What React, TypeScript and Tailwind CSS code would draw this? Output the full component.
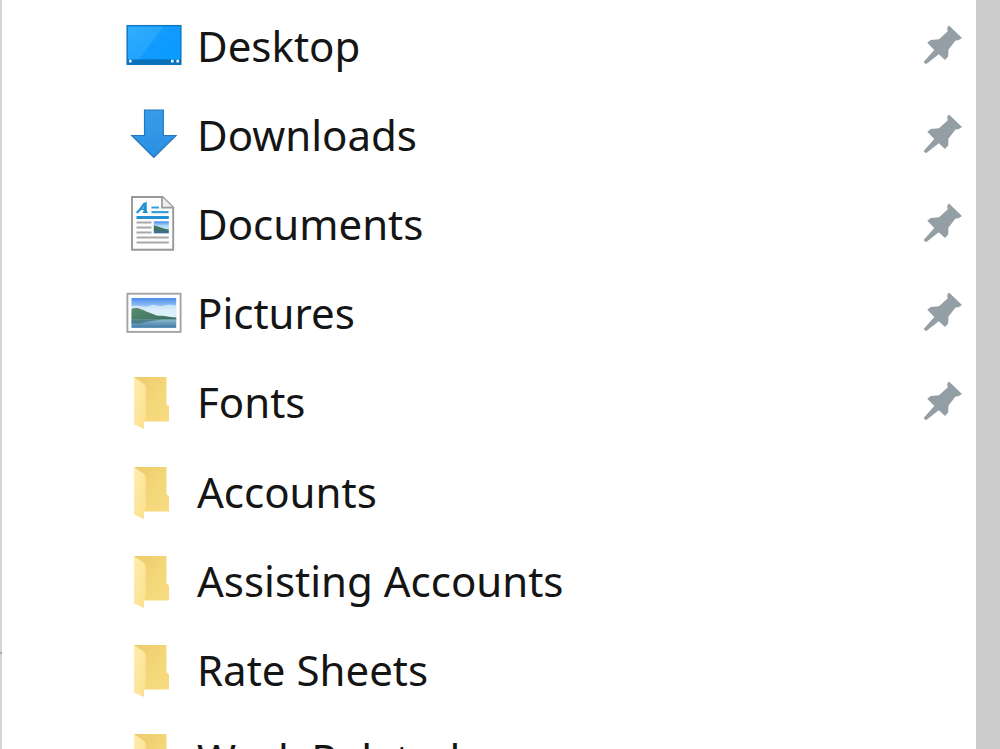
import type { ReactNode } from "react";

type IconName = "desktop" | "downloads" | "documents" | "pictures" | "folder";

const pinned: { name: string; icon: IconName }[] = [
  { name: "Desktop", icon: "desktop" },
  { name: "Downloads", icon: "downloads" },
  { name: "Documents", icon: "documents" },
  { name: "Pictures", icon: "pictures" },
  { name: "Fonts", icon: "folder" },
];

const recent: { name: string; icon: IconName }[] = [
  { name: "Accounts", icon: "folder" },
  { name: "Assisting Accounts", icon: "folder" },
  { name: "Rate Sheets", icon: "folder" },
  { name: "Work Related", icon: "folder" },
];

const art: Record<IconName, ReactNode> = {
  desktop: (
    <>
      <rect x="1.2" y="8.7" width="53.6" height="38.6" fill="url(#screen)" stroke="#0f78c2" strokeWidth="1.5" />
      <path d="M2 9.5H37L13 43H2Z" fill="#4dbcff" opacity=".3" />
      <rect x="1" y="42.4" width="54" height="4.8" fill="#0a70ba" />
      <path d="M3 42.8h2.6v2.6H3zM45 42.8h2.6v2.6H45zM50.4 42.8H53v2.6h-2.6z" fill="#e4f5ff" />
    </>
  ),
  downloads: (
    <path d="M18.5 4H37.3V29.5H50L27.8 51.5L5.8 29.5H18.5Z" fill="url(#arrow)" stroke="#2377bd" strokeWidth="1.2" />
  ),
  documents: (
    <>
      <path d="M6 2H36.5L47.2 12.5V54.7H6Z" fill="#fdfdfd" stroke="#989898" strokeWidth="1.9" />
      <path d="M36 2V12.7H47.2" fill="#eee" stroke="#989898" strokeWidth="1.7" />
      <path d="M10.5 17.5C13.5 17 15.5 11.5 18.5 8.5" fill="none" stroke="#2590d2" strokeWidth="2.2" />
      <path d="M17 8.5L20.6 6.5L20.9 16.3L22.3 18H16L17.6 16.3Z" fill="#2590d2" />
      <path d="M13.5 14.2H19" stroke="#2590d2" strokeWidth="1.6" />
      <path d="M25.5 12.5H33M25.5 17.2H42.5" stroke="#37a0dc" strokeWidth="2.2" />
      <path d="M10.5 22.4H42.8" stroke="#2590d2" strokeWidth="3" />
      <path d="M10.5 27.4H25.5M10.5 32.4H25.5M10.5 37.4H25.5M10.5 42.4H42.8M10.5 47.4H42.8" stroke="#a8a8a8" strokeWidth="2" />
      <rect x="27.8" y="26.3" width="15" height="12" fill="url(#sky)" />
      <path d="M27.8 30.5C32 31 37 34 42.8 34.5V36H27.8Z" fill="#3e7561" />
      <path d="M27.8 36H42.8V38.3H27.8Z" fill="#396f9a" />
    </>
  ),
  pictures: (
    <>
      <rect x="1.4" y="9.7" width="53.2" height="38.2" fill="#fff" stroke="#a4a4a4" strokeWidth="1.9" />
      <rect x="5.5" y="14" width="44.7" height="29.8" fill="url(#sky)" />
      <path d="M5.5 22C11 20 16 24 23 22C30 19 32 24 38 21.5C43 19.5 47 22 50.2 21V33H5.5Z" fill="#f2fafd" opacity=".6" />
      <path d="M5.5 25C8 23.4 12 23.6 15 25.2C18.5 26 19.5 27.6 23 28.4C27 29.4 29 31.8 34 31.8C40 31.6 45 33.6 50.2 33.6V36.5H5.5Z" fill="url(#hill)" />
      <rect x="5.5" y="35.4" width="44.7" height="8.4" fill="url(#water)" />
      <path d="M5.5 35.4H36L24 37.2L14 39.5H5.5Z" fill="#2f6064" opacity=".6" />
    </>
  ),
  folder: (
    <>
      <path d="M8 4H40.5V31L43 33.5V48.5H8Z" fill="url(#folderBack)" />
      <path d="M8 4L17.5 10.5Q19.7 12 19.7 14.5V45.5L18 48V56L8 51.5Z" fill="url(#folderFront)" />
    </>
  ),
};

function Gradients() {
  return (
    <svg width="0" height="0" className="absolute" aria-hidden="true">
      <defs>
        <linearGradient id="screen" x1="0" y1="0" x2="1" y2="1">
          <stop offset="0" stopColor="#27a8fb" />
          <stop offset=".5" stopColor="#109aff" />
          <stop offset="1" stopColor="#079cff" />
        </linearGradient>
        <linearGradient id="arrow" x1="0" y1="0" x2="0" y2="1">
          <stop offset="0" stopColor="#399ce9" />
          <stop offset="1" stopColor="#2b8fe2" />
        </linearGradient>
        <linearGradient id="sky" x1="0" y1="0" x2="0" y2="1">
          <stop offset="0" stopColor="#4a8bea" />
          <stop offset=".4" stopColor="#b6dcfa" />
          <stop offset="1" stopColor="#cfeaf5" />
        </linearGradient>
        <linearGradient id="hill" x1="0" y1="0" x2="1" y2="1">
          <stop offset="0" stopColor="#5b8d6c" />
          <stop offset="1" stopColor="#386e60" />
        </linearGradient>
        <linearGradient id="water" x1="0" y1="0" x2="0" y2="1">
          <stop offset="0" stopColor="#8fb9cd" />
          <stop offset="1" stopColor="#3f79a6" />
        </linearGradient>
        <linearGradient id="folderBack" x1="0" y1="0" x2="1" y2="1">
          <stop offset="0" stopColor="#eccb6c" />
          <stop offset=".55" stopColor="#f4d779" />
          <stop offset="1" stopColor="#f8dc80" />
        </linearGradient>
        <linearGradient id="folderFront" x1="0" y1="0" x2="1" y2="1">
          <stop offset="0" stopColor="#ffedaf" />
          <stop offset="1" stopColor="#fbdf8d" />
        </linearGradient>
      </defs>
    </svg>
  );
}

function Pin() {
  return (
    <svg viewBox="0 0 40 40" className="size-10" aria-hidden="true">
      <path
        d="M26 .5L39 13L35.5 15.2L32.5 15.5L25.5 24.5L25.2 31.5L22 35L15.8 29.3L3 39.3L.6 37L11.3 25L4.3 17.8L7.7 15L16 14.2L24.6 6.5L24.2 2.7Z"
        fill="#949fa5"
      />
    </svg>
  );
}

function Row({ name, icon, isPinned }: { name: string; icon: IconName; isPinned?: boolean }) {
  return (
    <li className="flex h-[89px] items-center pr-[13px] pl-[124px]">
      <a href={"#" + name.replace(" ", "-")} className="flex min-w-0 flex-1 items-center gap-[15px]">
        <svg viewBox="0 0 56 56" className="size-14 shrink-0" aria-hidden="true">
          {art[icon]}
        </svg>
        <span className="pt-0.5 text-[42px] leading-[56px] whitespace-nowrap">{name}</span>
      </a>
      {isPinned && (
        <button type="button" aria-label={"Unpin " + name} className="shrink-0">
          <Pin />
        </button>
      )}
    </li>
  );
}

export default function App() {
  return (
    <div className="flex h-screen overflow-hidden bg-white font-['Noto_Sans',sans-serif] text-[#151515]">
      <Gradients />
      <div className="relative w-0.5 shrink-0 bg-[#d4d4d4]">
        <div className="absolute top-[87%] left-0 h-0.5 w-0.5 bg-[#a8a8a8]" />
      </div>
      <nav aria-label="Quick access" className="min-w-0 flex-1">
        <ul>
          {pinned.map((item) => (
            <Row key={item.name} {...item} isPinned />
          ))}
        </ul>
        <ul className="mt-px">
          {recent.map((item) => (
            <Row key={item.name} {...item} />
          ))}
        </ul>
      </nav>
      <div className="w-6 shrink-0 bg-[#cdcdcd]" />
    </div>
  );
}
